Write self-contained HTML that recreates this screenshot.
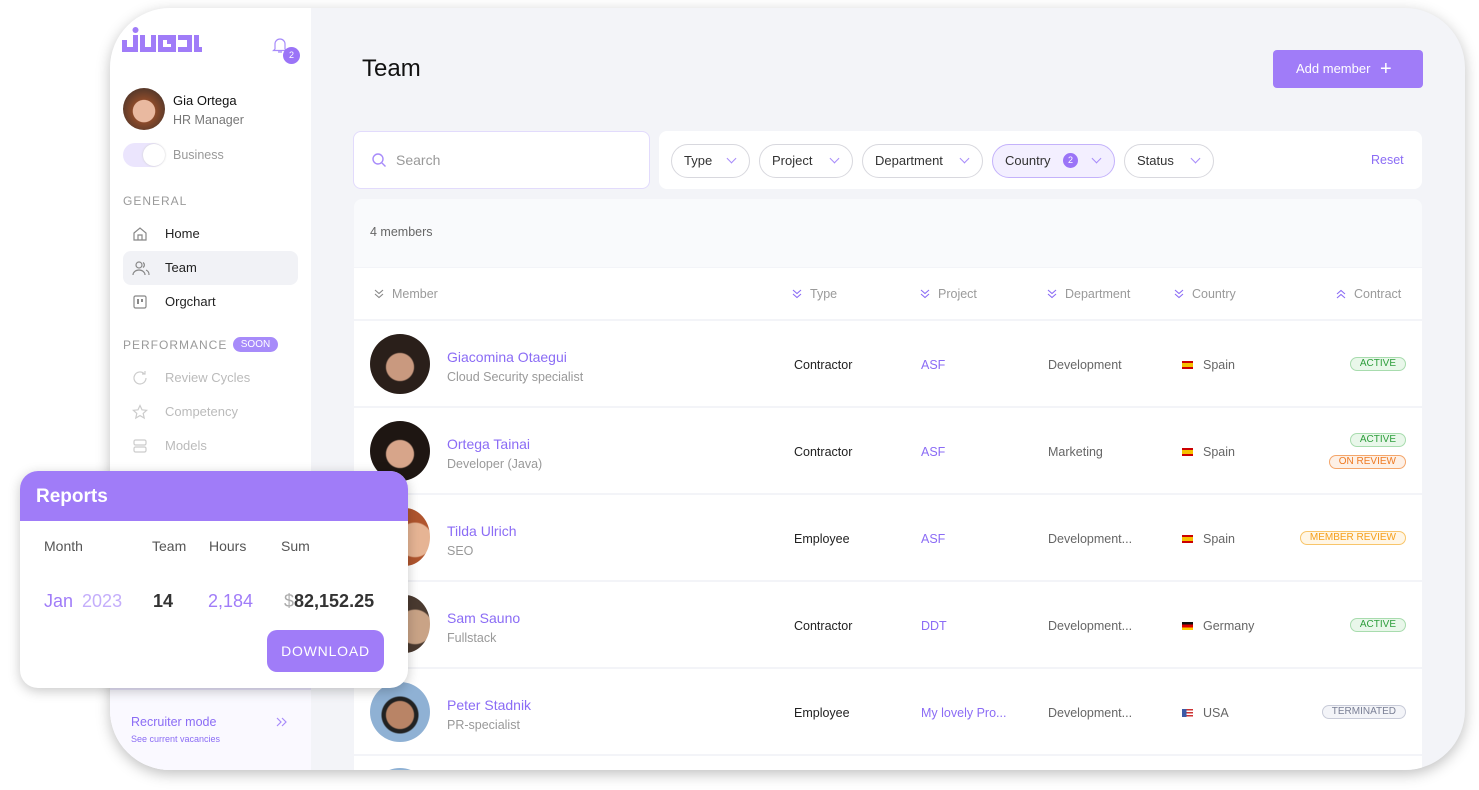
<!DOCTYPE html>
<html><head><meta charset="utf-8"><style>
*{box-sizing:border-box;margin:0;padding:0}
html,body{width:1479px;height:790px;overflow:hidden}
body{background:#fff;font-family:"Liberation Sans",sans-serif;position:relative}
.frame{position:absolute;left:110px;top:8px;width:1355px;height:762px;border-radius:60px;overflow:hidden;background:#f3f4f8;box-shadow:0 4px 14px rgba(0,0,0,.25)}
.side{position:absolute;left:0;top:0;width:201px;height:100%;background:#fff}
.abs{position:absolute}
.av{position:absolute;border-radius:50%;overflow:hidden}
.nav{position:absolute;left:13px;width:175px;height:34px;border-radius:8px;font-size:13px;color:#222;line-height:34px;padding-left:42px}
.nav svg{position:absolute;left:9px;top:9px}
.sec{position:absolute;left:13px;font-size:12px;letter-spacing:1px;color:#9a9a9a}
.chip{position:absolute;top:136px;height:34px;border:1px solid #d8d8de;border-radius:17px;font-size:13px;color:#333;line-height:32px;padding-left:12px}
.chip i{position:absolute;right:14px;top:10px;width:7px;height:7px;border-right:1.3px solid #a78bfa;border-bottom:1.3px solid #a78bfa;transform:rotate(45deg)}
.th{position:absolute;top:279px;font-size:12.5px;color:#9a9a9a}
.th svg{vertical-align:-1px;margin-right:8px}
.row{position:absolute;left:244px;width:1068px;height:85px;background:#fff}
.nm{position:absolute;left:93px;top:28px;font-size:14px;color:#8b6cf5}
.rl{position:absolute;left:93px;top:49px;font-size:12.5px;color:#999}
.c{position:absolute;top:37px;font-size:12.5px}
.tag{position:absolute;right:16px;height:14px;border-radius:7px;font-size:10px;line-height:12px;padding:0 9px;border:1px solid}
.act{color:#2e9e3c;background:#e9f7ea;border-color:#a8dcae}
.flag{display:inline-block;width:11px;height:8px;margin-right:10px;vertical-align:0}
</style></head><body>
<div class="frame">
 <div class="side">
  <svg class="abs" style="left:12px;top:18px" width="80" height="30" viewBox="0 0 80 30" fill="#a07cf8">
   <circle cx="13.5" cy="4" r="3"/>
   <path d="M0 14h5v7h6V9h5v17H0z"/>
   <path d="M18 9h5v12h6V9h5v17H18z"/>
   <path d="M36 9h18v5H41v7h8v-3h-4v-4h9v12H36z"/>
   <path d="M56 9h14v17H56v-5h9v-7h-9z"/>
   <path d="M72 9h5v12h3v5h-8z"/>
  </svg>
  <svg class="abs" style="left:162px;top:28px" width="16" height="18" viewBox="0 0 16 18"><path d="M3 13V8a5 5 0 0 1 10 0v5l1.5 1.5h-13z M6 16h4" fill="none" stroke="#a78bfa" stroke-width="1.2"/></svg>
  <div class="abs" style="left:173px;top:39px;width:17px;height:17px;border-radius:50%;background:#9b74f7;color:#fff;font-size:9px;text-align:center;line-height:17px">2</div>
  <div class="av" style="left:13px;top:80px;width:42px;height:42px;background:radial-gradient(circle at 50% 55%,#e9b9a0 0 35%,#8b4a2a 37%,#5b3a2a 70%)"></div>
  <div class="abs" style="left:63px;top:85px;font-size:13px;color:#111">Gia Ortega</div>
  <div class="abs" style="left:63px;top:105px;font-size:12.5px;color:#777">HR Manager</div>
  <div class="abs" style="left:13px;top:135px;width:42px;height:24px;border-radius:12px;background:#ebe5fd"></div>
  <div class="abs" style="left:33px;top:136px;width:22px;height:22px;border-radius:50%;background:#fff;box-shadow:0 0 2px #ccc"></div>
  <div class="abs" style="left:63px;top:140px;font-size:12.5px;color:#999">Business</div>
  <div class="sec" style="top:186px">GENERAL</div>
  <div class="nav" style="top:209px"><svg width="16" height="16" viewBox="0 0 16 16"><path d="M2 7l6-5 6 5v7H2z M6 14V9h4v5" fill="none" stroke="#888" stroke-width="1.2"/></svg>Home</div>
  <div class="nav" style="top:243px;background:#f1f2f6"><svg width="18" height="16" viewBox="0 0 18 16"><circle cx="7" cy="5" r="3" fill="none" stroke="#888" stroke-width="1.2"/><path d="M1 15a6 5 0 0 1 12 0M11 2.5a3 3 0 0 1 0 5M14 10a5 5 0 0 1 3 5" fill="none" stroke="#888" stroke-width="1.2"/></svg>Team</div>
  <div class="nav" style="top:277px"><svg width="16" height="16" viewBox="0 0 16 16"><rect x="2" y="2" width="12" height="12" rx="1.5" fill="none" stroke="#888" stroke-width="1.2"/><rect x="5" y="5" width="2" height="5" fill="#888"/><rect x="9" y="5" width="2" height="3" fill="#888"/></svg>Orgchart</div>
  <div class="sec" style="top:330px">PERFORMANCE</div>
  <div class="abs" style="left:123px;top:329px;width:45px;height:15px;border-radius:8px;background:#a78bfa;color:#fff;font-size:10px;text-align:center;line-height:15px">SOON</div>
  <div class="nav" style="top:353px;color:#bbb"><svg width="16" height="16" viewBox="0 0 16 16"><path d="M14 8a6 6 0 1 1-2-4.5M13 1v3h-3" fill="none" stroke="#ccc" stroke-width="1.2"/></svg>Review Cycles</div>
  <div class="nav" style="top:387px;color:#bbb"><svg width="16" height="16" viewBox="0 0 16 16"><path d="M8 1.5l2 4.3 4.6.5-3.4 3.1 1 4.6L8 11.6 3.8 14l1-4.6L1.4 6.3 6 5.8z" fill="none" stroke="#ccc" stroke-width="1.2"/></svg>Competency</div>
  <div class="nav" style="top:421px;color:#bbb"><svg width="16" height="16" viewBox="0 0 16 16"><rect x="2" y="2" width="12" height="5" rx="1.5" fill="none" stroke="#ccc" stroke-width="1.2"/><rect x="2" y="9" width="12" height="5" rx="1.5" fill="none" stroke="#ccc" stroke-width="1.2"/></svg>Models</div>
  <div class="abs" style="left:0;top:680px;width:201px;height:82px;background:#faf9ff;border-top:2px solid #e8e4fb"></div>
  <div class="abs" style="left:21px;top:707px;font-size:12.5px;color:#8b6cf5">Recruiter mode</div>
  <div class="abs" style="left:21px;top:726px;font-size:9px;color:#8b6cf5">See current vacancies</div>
  <svg class="abs" style="left:166px;top:709px" width="12" height="10" viewBox="0 0 12 10"><path d="M1 1l4 4-4 4M6 1l4 4-4 4" fill="none" stroke="#a78bfa" stroke-width="1.2"/></svg>
 </div>
 <div class="abs" style="left:252px;top:47px;font-size:24px;color:#111">Team</div>
 <div class="abs" style="left:1163px;top:42px;width:150px;height:38px;border-radius:4px;background:#a07cf8;color:#fff;font-size:13px;line-height:38px;padding-left:23px">Add member <span style="font-size:20px;vertical-align:-2px;margin-left:6px;font-weight:300">+</span></div>
 <div class="abs" style="left:243px;top:123px;width:297px;height:58px;border-radius:8px;background:#fff;border:1px solid #e2dbfc"></div>
 <svg class="abs" style="left:261px;top:144px" width="16" height="16" viewBox="0 0 16 16"><circle cx="7" cy="7" r="5" fill="none" stroke="#a78bfa" stroke-width="1.4"/><path d="M11 11l3.5 3.5" stroke="#a78bfa" stroke-width="1.4"/></svg>
 <div class="abs" style="left:286px;top:144px;font-size:14px;color:#999">Search</div>
 <div class="abs" style="left:549px;top:123px;width:763px;height:58px;border-radius:8px;background:#fff"></div>
 <div class="chip" style="left:561px;width:79px">Type<i></i></div>
 <div class="chip" style="left:649px;width:94px">Project<i></i></div>
 <div class="chip" style="left:752px;width:121px">Department<i></i></div>
 <div class="chip" style="left:882px;width:123px;background:#f3efff;border-color:#c4b2fb">Country<span style="position:absolute;left:70px;top:8px;width:15px;height:15px;border-radius:50%;background:#9b74f7;color:#fff;font-size:9px;text-align:center;line-height:15px">2</span><i></i></div>
 <div class="chip" style="left:1014px;width:90px">Status<i></i></div>
 <div class="abs" style="left:1261px;top:145px;font-size:12.5px;color:#8b6cf5">Reset</div>
 <div class="abs" style="left:244px;top:191px;width:1068px;height:68px;background:#f9fafc;border-radius:8px 8px 0 0"></div>
 <div class="abs" style="left:260px;top:217px;font-size:12.5px;color:#666">4 members</div>
 <div class="abs" style="left:244px;top:260px;width:1068px;height:51px;background:#fff"></div>
 <div class="th" style="left:264px"><svg width="10" height="10" viewBox="0 0 10 10"><path d="M1 1l4 3.5 4-3.5M1 5l4 3.5 4-3.5" fill="none" stroke="#888" stroke-width="1.1"/></svg>Member</div>
 <div class="th" style="left:682px"><svg width="10" height="10" viewBox="0 0 10 10"><path d="M1 1l4 3.5 4-3.5M1 5l4 3.5 4-3.5" fill="none" stroke="#8b6cf5" stroke-width="1.1"/></svg>Type</div>
 <div class="th" style="left:810px"><svg width="10" height="10" viewBox="0 0 10 10"><path d="M1 1l4 3.5 4-3.5M1 5l4 3.5 4-3.5" fill="none" stroke="#8b6cf5" stroke-width="1.1"/></svg>Project</div>
 <div class="th" style="left:937px"><svg width="10" height="10" viewBox="0 0 10 10"><path d="M1 1l4 3.5 4-3.5M1 5l4 3.5 4-3.5" fill="none" stroke="#8b6cf5" stroke-width="1.1"/></svg>Department</div>
 <div class="th" style="left:1064px"><svg width="10" height="10" viewBox="0 0 10 10"><path d="M1 1l4 3.5 4-3.5M1 5l4 3.5 4-3.5" fill="none" stroke="#8b6cf5" stroke-width="1.1"/></svg>Country</div>
 <div class="th" style="left:1226px"><svg width="10" height="10" viewBox="0 0 10 10"><path d="M1 5l4-3.5 4 3.5M1 9l4-3.5 4 3.5" fill="none" stroke="#8b6cf5" stroke-width="1.1"/></svg>Contract</div>

 <div class="row" style="top:313px"><div class="av" style="left:16px;top:13px;width:60px;height:60px;background:radial-gradient(circle at 50% 55%,#c9997f 0 30%,#2a1f1a 33%)"></div><div class="nm">Giacomina Otaegui</div><div class="rl">Cloud Security specialist</div><div class="c" style="left:440px;color:#222">Contractor</div><div class="c" style="left:567px;color:#8b6cf5">ASF</div><div class="c" style="left:694px;color:#666">Development</div><div class="c" style="left:828px;color:#666"><span class="flag" style="background:linear-gradient(#c00 25%,#f6c000 25% 75%,#c00 75%)"></span>Spain</div><div class="tag act" style="top:36px">ACTIVE</div></div>
 <div class="row" style="top:400px"><div class="av" style="left:16px;top:13px;width:60px;height:60px;background:radial-gradient(circle at 50% 55%,#d7a58a 0 30%,#1e1612 33%)"></div><div class="nm">Ortega Tainai</div><div class="rl">Developer (Java)</div><div class="c" style="left:440px;color:#222">Contractor</div><div class="c" style="left:567px;color:#8b6cf5">ASF</div><div class="c" style="left:694px;color:#666">Marketing</div><div class="c" style="left:828px;color:#666"><span class="flag" style="background:linear-gradient(#c00 25%,#f6c000 25% 75%,#c00 75%)"></span>Spain</div><div class="tag act" style="top:25px">ACTIVE</div><div class="tag" style="top:47px;color:#ef7a22;background:#fdf0e6;border-color:#f4a66b">ON REVIEW</div></div>
 <div class="row" style="top:487px"><div class="nm">Tilda Ulrich</div><div class="rl">SEO</div><div class="c" style="left:440px;color:#222">Employee</div><div class="c" style="left:567px;color:#8b6cf5">ASF</div><div class="c" style="left:694px;color:#666">Development...</div><div class="c" style="left:828px;color:#666"><span class="flag" style="background:linear-gradient(#c00 25%,#f6c000 25% 75%,#c00 75%)"></span>Spain</div><div class="tag" style="top:36px;color:#f59f1a;background:#fff6e6;border-color:#f8c56a">MEMBER REVIEW</div></div>
 <div class="row" style="top:574px"><div class="nm">Sam Sauno</div><div class="rl">Fullstack</div><div class="c" style="left:440px;color:#222">Contractor</div><div class="c" style="left:567px;color:#8b6cf5">DDT</div><div class="c" style="left:694px;color:#666">Development...</div><div class="c" style="left:828px;color:#666"><span class="flag" style="background:linear-gradient(#111 33%,#d00 33% 66%,#fc0 66%)"></span>Germany</div><div class="tag act" style="top:36px">ACTIVE</div></div>
 <div class="row" style="top:661px"><div class="av" style="left:16px;top:13px;width:60px;height:60px;background:radial-gradient(circle at 50% 55%,#b98466 0 30%,#222 33% 40%,#8fb1d4 43%)"></div><div class="nm">Peter Stadnik</div><div class="rl">PR-specialist</div><div class="c" style="left:440px;color:#222">Employee</div><div class="c" style="left:567px;color:#8b6cf5">My lovely Pro...</div><div class="c" style="left:694px;color:#666">Development...</div><div class="c" style="left:828px;color:#666"><span class="flag" style="background:linear-gradient(90deg,#3c5aa6 40%,transparent 40%),repeating-linear-gradient(#c33 0 1.5px,#fff 1.5px 3px)"></span>USA</div><div class="tag" style="top:36px;color:#7a7f95;background:#f3f4f8;border-color:#c8cbd8">TERMINATED</div></div>
 <div class="row" style="top:748px;height:14px"><div class="av" style="left:16px;top:12px;width:60px;height:60px;background:#8fb1d4"></div></div>
</div>
<div class="av" style="left:380px;top:508px;width:50px;height:58px;background:radial-gradient(circle at 70% 55%,#e6b494 0 35%,#b0552e 38%)"></div>
<div class="av" style="left:380px;top:595px;width:50px;height:58px;background:radial-gradient(circle at 70% 55%,#c9a386 0 35%,#4a3a30 38%)"></div>
<div class="abs" style="left:20px;top:471px;width:388px;height:217px;border-radius:18px;background:#fff;overflow:hidden;box-shadow:0 3px 12px rgba(0,0,0,.22)">
 <div style="height:50px;background:#a07cf8;color:#fff;font-size:19px;font-weight:bold;padding:15px 0 0 16px">Reports</div>
 <div class="abs" style="left:24px;top:67px;font-size:14px;color:#555">Month</div>
 <div class="abs" style="left:132px;top:67px;font-size:14px;color:#555">Team</div>
 <div class="abs" style="left:189px;top:67px;font-size:14px;color:#555">Hours</div>
 <div class="abs" style="left:261px;top:67px;font-size:14px;color:#555">Sum</div>
 <div class="abs" style="left:24px;top:120px;font-size:18px;color:#a07cf8">Jan <span style="color:#c4aefb;margin-left:4px">2023</span></div>
 <div class="abs" style="left:133px;top:120px;font-size:18px;color:#333;font-weight:bold">14</div>
 <div class="abs" style="left:188px;top:120px;font-size:18px;color:#a07cf8">2,184</div>
 <div class="abs" style="left:264px;top:120px;font-size:18px;color:#333;font-weight:bold"><span style="color:#aaa;font-weight:normal">$</span>82,152.25</div>
 <div class="abs" style="left:247px;top:159px;width:117px;height:42px;border-radius:10px;background:#a07cf8;color:#fff;font-size:14px;letter-spacing:.8px;text-align:center;line-height:42px">DOWNLOAD</div>
</div>
</body></html>
